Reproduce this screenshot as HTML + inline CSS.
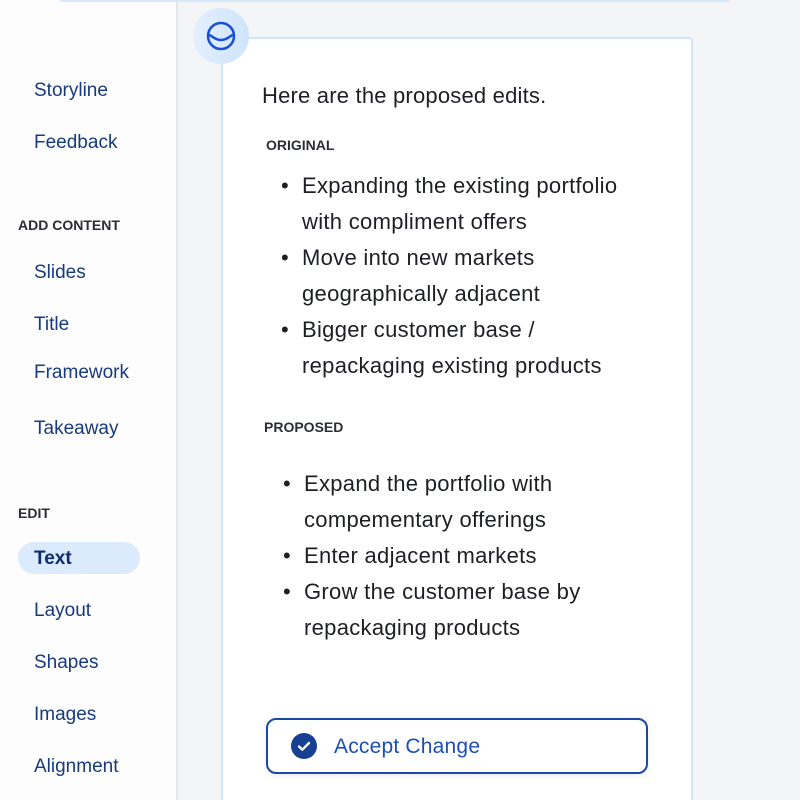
<!DOCTYPE html>
<html><head><style>
html,body{margin:0;width:800px;height:800px;overflow:hidden}
body{background:#f4f5f7;font-family:"Liberation Sans",sans-serif;position:relative}
.side{position:absolute;left:0;top:0;width:176px;height:800px;background:#fdfdfd;border-right:2px solid #e6e7ea}
.t{position:absolute;white-space:nowrap}
.nav{left:34px;font-size:19px;color:#173a7e}
.hd{left:18px;font-size:14px;font-weight:bold;color:#2a2d33}
.card{position:absolute;left:221px;top:37px;width:468px;height:770px;background:#fff;border:2px solid #cfe6fb;border-radius:4px}
.body{font-size:22px;color:#1d1f24;letter-spacing:0.2px}
.bul{font-size:22px;color:#1d1f24;line-height:36px;letter-spacing:0.3px}
</style></head><body>
<div style="position:absolute;left:60px;top:0;width:670px;height:2px;background:#d6e8fb;border-radius:0 0 6px 6px;z-index:3"></div>
<div class="side"></div>
<div class="t nav" style="top:80px">Storyline</div>
<div class="t nav" style="top:132px">Feedback</div>
<div class="t hd" style="top:217px">ADD CONTENT</div>
<div class="t nav" style="top:262px">Slides</div>
<div class="t nav" style="top:314px">Title</div>
<div class="t nav" style="top:362px">Framework</div>
<div class="t nav" style="top:418px">Takeaway</div>
<div class="t hd" style="top:505px">EDIT</div>
<div style="position:absolute;left:18px;top:542px;width:122px;height:32px;background:#dceafd;border-radius:16px"></div>
<div class="t nav" style="top:548px;font-weight:bold;color:#0f2d6b">Text</div>
<div class="t nav" style="top:600px">Layout</div>
<div class="t nav" style="top:652px">Shapes</div>
<div class="t nav" style="top:704px">Images</div>
<div class="t nav" style="top:756px">Alignment</div>

<div class="card"></div>
<div style="position:absolute;left:193px;top:8px;width:56px;height:56px;border-radius:50%;background:linear-gradient(90deg,#e3efff,#cfe4fb)"></div>
<svg style="position:absolute;left:204px;top:19px" width="34" height="34" viewBox="0 0 34 34"><circle cx="17" cy="17" r="13" fill="none" stroke="#1a4fd8" stroke-width="2.5"/><path d="M4.5 16 C8 16,10 21,17 21 S26 16,29.5 16" fill="none" stroke="#1a4fd8" stroke-width="2.5"/></svg>

<div class="t body" style="left:262px;top:83px">Here are the proposed edits.</div>
<div class="t hd" style="left:266px;top:137px">ORIGINAL</div>
<div class="t bul" style="left:281px;top:168px">•<br><br>•<br><br>•</div>
<div class="t bul" style="left:302px;top:168px">Expanding the existing portfolio<br>with compliment offers<br>Move into new markets<br>geographically adjacent<br>Bigger customer base /<br>repackaging existing products</div>
<div class="t hd" style="left:264px;top:419px">PROPOSED</div>
<div class="t bul" style="left:283px;top:466px">•<br><br>•<br>•</div>
<div class="t bul" style="left:304px;top:466px">Expand the portfolio with<br>compementary offerings<br>Enter adjacent markets<br>Grow the customer base by<br>repackaging products</div>

<div style="position:absolute;left:266px;top:718px;width:378px;height:52px;border:2px solid #1a48a8;border-radius:10px;background:#fff;box-shadow:0 2px 6px rgba(0,0,0,.08)"></div>
<svg style="position:absolute;left:291px;top:733px" width="26" height="26" viewBox="0 0 26 26"><circle cx="13" cy="13" r="13" fill="#173f94"/><path d="M8 13.5l3.3 3.2L18 10" fill="none" stroke="#fff" stroke-width="2.3" stroke-linecap="round" stroke-linejoin="round"/></svg>
<div class="t" style="left:334px;top:735px;font-size:21px;color:#1a4fb8;letter-spacing:0.2px">Accept Change</div>
</body></html>
